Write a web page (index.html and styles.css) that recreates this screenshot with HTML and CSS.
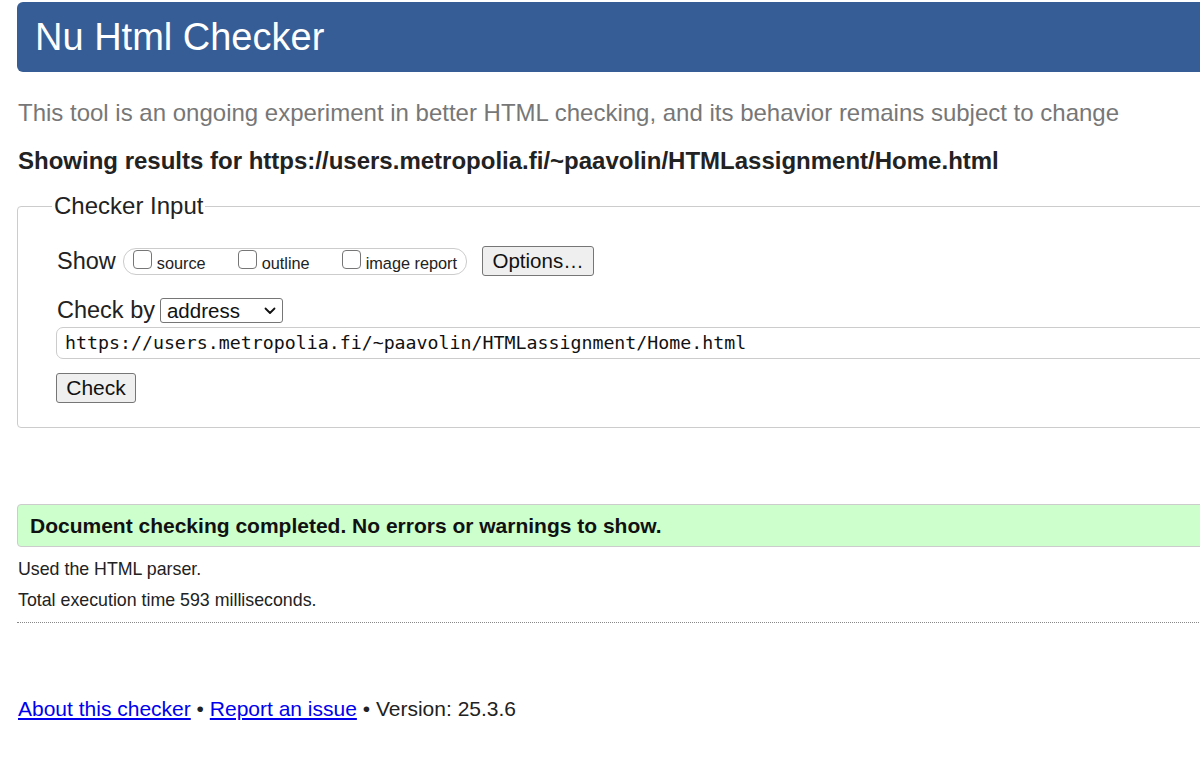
FILE: index.html
```html
<!DOCTYPE html>
<html lang="en">
<head>
<meta charset="utf-8">
<title>Nu Html Checker</title>
<link rel="stylesheet" href="styles.css">
</head>
<body>
<div class="page">
  <h1 class="banner">Nu Html Checker</h1>
  <p class="intro">This tool is an ongoing experiment in better HTML checking, and its behavior remains subject to change</p>
  <p class="showing">Showing results for https://users.metropolia.fi/~paavolin/HTMLassignment/Home.html</p>
  <form class="form">
    <fieldset class="box">
      <legend class="legend">Checker Input</legend>
      <div class="row show-row">
        <span class="lbl">Show</span>
        <span class="pill">
          <label class="opt"><input type="checkbox" class="cb"><span>source</span></label>
          <label class="opt"><input type="checkbox" class="cb"><span>outline</span></label>
          <label class="opt"><input type="checkbox" class="cb"><span>image report</span></label>
        </span>
        <button type="button" class="btn options">Options…</button>
      </div>
      <div class="row by-row">
        <span class="lbl">Check by</span>
        <span class="select">address<svg class="chev" width="12" height="8" viewBox="0 0 12 8"><path d="M1.5 1.5 L6 6 L10.5 1.5" fill="none" stroke="#111" stroke-width="1.8" stroke-linecap="round" stroke-linejoin="round"/></svg></span>
      </div>
      <div class="url">https://users.metropolia.fi/~paavolin/HTMLassignment/Home.html</div>
      <button type="button" class="btn check">Check</button>
    </fieldset>
  </form>
  <div class="success">Document checking completed. No errors or warnings to show.</div>
  <div class="details">
    <p class="meta">Used the HTML parser.</p>
    <p class="meta">Total execution time 593 milliseconds.</p>
  </div>
  <hr class="sep">
  <p class="footer"><a href="#">About this checker</a> • <a href="#">Report an issue</a> • Version: 25.3.6</p>
</div>
</body>
</html>
```
FILE: styles.css
```css
html, body {
  margin: 0;
  padding: 0;
  overflow: hidden;
  background: #fff;
}
body {
  font-family: "Liberation Sans", Arial, sans-serif;
  color: #222;
}
.page {
  width: 1300px;
  padding-left: 17px;
  padding-top: 2px;
}
.banner {
  margin: 0;
  height: 70px;
  line-height: 70px;
  background: #365d95;
  color: #fff;
  font-weight: normal;
  font-size: 38px;
  padding-left: 18px;
  border-radius: 6px;
}
.intro {
  margin: 28px 0 0 1px;
  font-size: 24px;
  line-height: 26px;
  color: #777;
}
.showing {
  margin: 22px 0 0 1px;
  font-size: 24px;
  line-height: 26px;
  font-weight: bold;
  color: #222;
}
.form {
  margin: 19px 0 0 0;
}
.box {
  margin: 0;
  padding: 0 0 24px 39px;
  border: 1px solid #ccc;
  border-radius: 4px;
  min-width: 0;
}
.legend {
  padding: 0 2px;
  margin-left: -5px;
  font-size: 24px;
  line-height: 26px;
  color: #222;
}
.row {
  display: flex;
  align-items: center;
}
.lbl {
  font-size: 23.5px;
  color: #222;
}
.show-row {
  margin-top: 27px;
  height: 30px;
}
.pill {
  display: flex;
  align-items: center;
  height: 25px;
  margin-left: 7px;
  padding: 0 9px 0 9px;
  border: 1px solid #ccc;
  border-radius: 13px;
  gap: 32px;
}
.opt {
  display: flex;
  align-items: center;
  font-size: 16.3px;
  color: #222;
}
.opt span {
  margin-top: 4px;
}
.cb {
  appearance: none;
  -webkit-appearance: none;
  width: 19px;
  height: 19px;
  margin: -4px 5px 0 0;
  border: 1px solid #767676;
  border-radius: 4px;
  background: #fff;
}
.btn {
  font-family: "Liberation Sans", Arial, sans-serif;
  background: #efefef;
  border: 1px solid #767676;
  border-radius: 3px;
  color: #111;
  padding: 0;
  box-sizing: border-box;
}
.options {
  margin-left: 15px;
  width: 112px;
  height: 30px;
  font-size: 20.5px;
}
.by-row {
  margin-top: 22px;
  height: 25px;
}
.select {
  display: flex;
  align-items: center;
  justify-content: space-between;
  margin-left: 5px;
  width: 123px;
  height: 25px;
  box-sizing: border-box;
  border: 1px solid #767676;
  border-radius: 3px;
  padding: 0 6px 0 6px;
  font-size: 20.5px;
  color: #111;
}
.chev {
  margin-top: 1px;
}
.url {
  margin: 4px 0 0 -1px;
  height: 32px;
  box-sizing: border-box;
  border: 1px solid #ccc;
  border-radius: 7px;
  padding-left: 8px;
  font-family: "DejaVu Sans Mono", "Liberation Mono", monospace;
  font-size: 18.25px;
  line-height: 30px;
  color: #111;
}
.check {
  display: block;
  margin: 14px 0 0 -1px;
  width: 80px;
  height: 30px;
  font-size: 21px;
}
.success {
  margin-top: 76px;
  height: 43px;
  box-sizing: border-box;
  background: #ccffcc;
  border: 1px solid #ccc;
  border-radius: 4px;
  padding-left: 12px;
  line-height: 41px;
  font-size: 21px;
  font-weight: bold;
  color: #111;
}
.details {
  padding-top: 2px;
}
.meta {
  margin: 10px 0 0 1px;
  font-size: 17.8px;
  line-height: 21px;
  color: #222;
}
.sep {
  margin: 11px 0 0 0;
  border: 0;
  border-top: 1px dotted #888;
  height: 0;
}
.footer {
  margin: 73px 0 0 1px;
  font-size: 21px;
  line-height: 26px;
  color: #222;
}
.footer a {
  color: #00e;
}
```
